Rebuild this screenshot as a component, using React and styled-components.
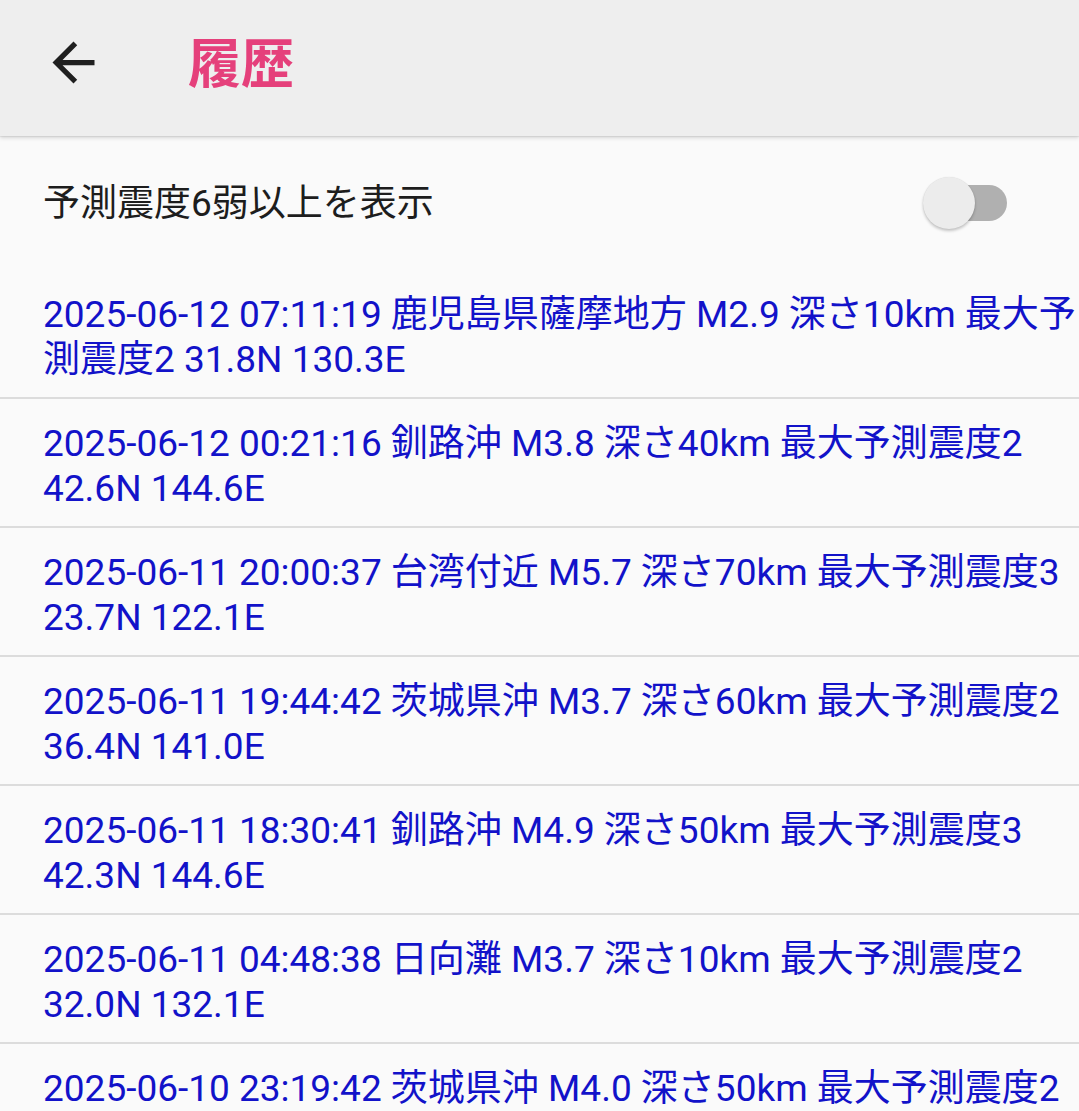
import React from "react";
import styled, { createGlobalStyle } from "styled-components";

const GlobalStyle = createGlobalStyle`
  html, body {
    margin: 0;
    padding: 0;
    background: #fafafa;
    overflow: hidden;
  }
  body {
    font-family: Roboto, "Noto Sans CJK JP", sans-serif;
  }
`;

const Page = styled.div`
  width: 1079px;
  height: 1111px;
  background: #fafafa;
  overflow: hidden;
  display: flex;
  flex-direction: column;
`;

const AppBar = styled.header`
  position: relative;
  z-index: 1;
  height: 136px;
  flex: 0 0 136px;
  box-sizing: border-box;
  background: #eeeeee;
  display: flex;
  align-items: center;
  padding: 0 0 12px 42px;
  gap: 83px;
  box-shadow: 0 2px 4px rgba(0, 0, 0, 0.14), 0 1px 1px rgba(0, 0, 0, 0.06);
`;

const BackButton = styled.button`
  width: 63px;
  height: 63px;
  padding: 0;
  border: none;
  background: transparent;
  display: flex;
  align-items: center;
  justify-content: center;
  color: #1f1f1f;
  svg {
    display: block;
  }
`;

const Title = styled.h1`
  margin: 0 0 4px;
  font-family: "Noto Sans CJK JP", sans-serif;
  font-size: 53px;
  font-weight: 700;
  line-height: 1;
  color: #e5407b;
`;

const ToggleRow = styled.div`
  height: 134px;
  flex: 0 0 134px;
  box-sizing: border-box;
  display: flex;
  align-items: center;
  justify-content: space-between;
  padding: 0 72px 0 43px;
`;

const ToggleLabel = styled.span`
  font-size: 37px;
  line-height: 45px;
  color: #1d1d1d;
`;

const Switch = styled.div`
  position: relative;
  width: 84px;
  height: 52px;
  flex: 0 0 84px;
  display: flex;
  align-items: center;
`;

const Track = styled.div`
  margin-left: 16px;
  width: 68px;
  height: 36px;
  border-radius: 18px;
  background: #b0b0b0;
`;

const Thumb = styled.div`
  position: absolute;
  left: 0;
  top: 0;
  width: 52px;
  height: 52px;
  border-radius: 50%;
  background: #ececec;
  box-shadow: 0 2px 3px rgba(0, 0, 0, 0.22), 0 0 1px rgba(0, 0, 0, 0.12);
`;

const List = styled.ul`
  list-style: none;
  margin: 0;
  padding: 0;
`;

const Item = styled.li`
  padding: 22px 0 15px 43px;
  border-bottom: 2px solid #dcdcdc;
  color: #1212c9;
  font-size: 37px;
  line-height: 45px;
`;

const Line = styled.span`
  display: block;
  white-space: nowrap;
`;

const entries = [
  ["2025-06-12 07:11:19 鹿児島県薩摩地方 M2.9 深さ10km 最大予", "測震度2 31.8N 130.3E"],
  ["2025-06-12 00:21:16 釧路沖 M3.8 深さ40km 最大予測震度2", "42.6N 144.6E"],
  ["2025-06-11 20:00:37 台湾付近 M5.7 深さ70km 最大予測震度3", "23.7N 122.1E"],
  ["2025-06-11 19:44:42 茨城県沖 M3.7 深さ60km 最大予測震度2", "36.4N 141.0E"],
  ["2025-06-11 18:30:41 釧路沖 M4.9 深さ50km 最大予測震度3", "42.3N 144.6E"],
  ["2025-06-11 04:48:38 日向灘 M3.7 深さ10km 最大予測震度2", "32.0N 132.1E"],
  ["2025-06-10 23:19:42 茨城県沖 M4.0 深さ50km 最大予測震度2"],
];

export default function App() {
  return (
    <Page>
      <GlobalStyle />
      <AppBar>
        <BackButton aria-label="戻る">
          <svg width="63" height="63" viewBox="0 0 24 24" fill="currentColor">
            <path d="M20 11H7.83l5.59-5.59L12 4l-8 8 8 8 1.41-1.41L7.83 13H20v-2z" />
          </svg>
        </BackButton>
        <Title>履歴</Title>
      </AppBar>
      <ToggleRow>
        <ToggleLabel>予測震度6弱以上を表示</ToggleLabel>
        <Switch>
          <Track />
          <Thumb />
        </Switch>
      </ToggleRow>
      <List>
        {entries.map((lines, i) => (
          <Item key={i}>
            {lines.map((l, j) => (
              <Line key={j}>{l}</Line>
            ))}
          </Item>
        ))}
      </List>
    </Page>
  );
}
